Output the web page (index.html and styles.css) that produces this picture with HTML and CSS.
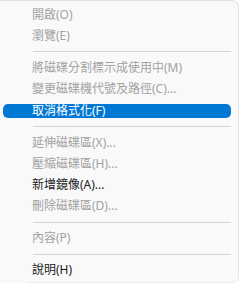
FILE: index.html
```html
<!DOCTYPE html>
<html lang="zh-Hant">
<head>
    <meta charset="UTF-8">
    <meta name="viewport" content="width=device-width, initial-scale=1.0">
    <title>磁碟管理 功能表</title>
    <link rel="stylesheet" href="styles.css">
</head>
<body>
    <div class="menu">
        <ul class="menu-list">
            <li class="menu-item disabled">開啟(O)</li>
            <li class="menu-item disabled">瀏覽(E)</li>
            <li class="separator"></li>
            <li class="menu-item disabled">將磁碟分割標示成使用中(M)</li>
            <li class="menu-item disabled">變更磁碟機代號及路徑(C)...</li>
            <li class="menu-item active"><span class="highlight">取消格式化(F)</span></li>
            <li class="separator"></li>
            <li class="menu-item disabled">延伸磁碟區(X)...</li>
            <li class="menu-item disabled">壓縮磁碟區(H)...</li>
            <li class="menu-item">新增鏡像(A)...</li>
            <li class="menu-item disabled">刪除磁碟區(D)...</li>
            <li class="separator"></li>
            <li class="menu-item disabled">內容(P)</li>
            <li class="separator"></li>
            <li class="menu-item">說明(H)</li>
        </ul>
        <div class="menu-footer"></div>
    </div>
</body>
</html>
```

FILE: styles.css
```css
:root {
    --menu-bg: #f9f9f9;
    --border-color: #e3e3e3;
    --text-color: #1b1b1b;
    --disabled-color: #a2a2a2;
    --accent: #0078d4;
    --separator: #d5d5d5;
}

body {
    margin: 0;
    background-color: #ffffff;
    font-family: "Noto Sans", "Noto Sans CJK TC", sans-serif;
    font-size: 12px;
}

.menu {
    width: 239px;
    height: 283px;
    background-color: var(--menu-bg);
    border-top: 1px solid var(--border-color);
    border-right: 1px solid var(--border-color);
    border-top-right-radius: 7px;
    border-bottom-right-radius: 7px;
    box-sizing: border-box;
    overflow: hidden;
}

.menu-list {
    list-style: none;
    margin: 0;
    padding: 3px 0 0 0;
}

.menu-item {
    height: 21.3px;
    display: flex;
    align-items: center;
    padding-left: 32px;
    color: var(--text-color);
    white-space: nowrap;
    line-height: 1;
}

.menu-item.disabled {
    color: var(--disabled-color);
}

.menu-item.active {
    padding-left: 3px;
}

.highlight {
    display: flex;
    align-items: center;
    width: 228px;
    height: 14px;
    padding-left: 29px;
    box-sizing: border-box;
    background-color: var(--accent);
    color: #ffffff;
    border-radius: 5px;
}

.separator {
    height: 10.7px;
    display: flex;
    align-items: center;
    padding-left: 33px;
    padding-right: 7px;
}

.separator::before {
    content: "";
    flex: 1;
    height: 1px;
    background-color: var(--separator);
}

.menu-footer {
    height: 4px;
    margin: 1px 0 0 27px;
    background-color: #ececec;
}
```
